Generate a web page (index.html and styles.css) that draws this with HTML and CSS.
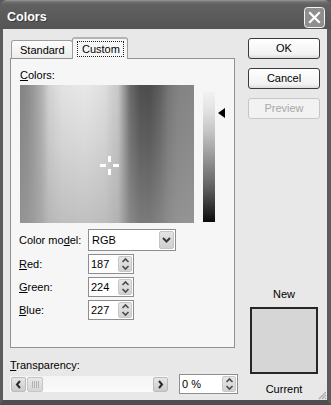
FILE: index.html
```html
<!DOCTYPE html>
<html>
<head>
<meta charset="utf-8">
<title>Colors</title>
<link rel="stylesheet" href="styles.css">
</head>
<body>
<div class="window">
  <div class="titlebar">
    <span class="title">Colors</span>
    <span class="close">
      <svg width="21" height="21" viewBox="0 0 21 21">
        <rect x="0.5" y="0.5" width="20" height="20" rx="3" fill="#8e8e8e" stroke="#f4f4f4"/>
        <path d="M6 6 L15 15 M15 6 L6 15" stroke="#fff" stroke-width="2.2" stroke-linecap="square"/>
      </svg>
    </span>
  </div>
  <div class="frame">
    <div class="left">
      <div class="tabs">
        <div class="tab">Standard</div>
        <div class="tab active"><span class="focus">Custom</span></div>
      </div>
      <div class="panel">
        <div class="label"><u>C</u>olors:</div>
        <div class="picker">
          <div class="spectrum">
            <svg class="cross" width="19" height="19" viewBox="0 0 19 19">
              <rect x="0" y="8" width="6" height="3" fill="#fff"/>
              <rect x="13" y="8" width="6" height="3" fill="#fff"/>
              <rect x="8" y="0" width="3" height="6" fill="#fff"/>
              <rect x="8" y="13" width="3" height="6" fill="#fff"/>
            </svg>
          </div>
          <div class="lum-wrap">
            <div class="lum"></div>
            <span class="pointer"></span>
          </div>
        </div>
        <div class="fields">
          <span class="flabel">Color mo<u>d</u>el:</span>
          <div class="combo">
            <span class="val">RGB</span>
            <span class="combo-btn">
              <svg width="9" height="6" viewBox="0 0 9 6"><path d="M1 1 L4.5 4.5 L8 1" fill="none" stroke="#3a3a3a" stroke-width="2"/></svg>
            </span>
          </div>
          <span class="flabel"><u>R</u>ed:</span>
          <div class="spin">
            <span class="val">187</span>
            <span class="spin-btn"><svg width="9" height="14" viewBox="0 0 9 14"><path d="M1.5 5 L4.5 2 L7.5 5 M1.5 9 L4.5 12 L7.5 9" fill="none" stroke="#4a4a4a" stroke-width="1.6"/></svg></span>
          </div>
          <span class="flabel"><u>G</u>reen:</span>
          <div class="spin">
            <span class="val">224</span>
            <span class="spin-btn"><svg width="9" height="14" viewBox="0 0 9 14"><path d="M1.5 5 L4.5 2 L7.5 5 M1.5 9 L4.5 12 L7.5 9" fill="none" stroke="#4a4a4a" stroke-width="1.6"/></svg></span>
          </div>
          <span class="flabel"><u>B</u>lue:</span>
          <div class="spin">
            <span class="val">227</span>
            <span class="spin-btn"><svg width="9" height="14" viewBox="0 0 9 14"><path d="M1.5 5 L4.5 2 L7.5 5 M1.5 9 L4.5 12 L7.5 9" fill="none" stroke="#4a4a4a" stroke-width="1.6"/></svg></span>
          </div>
        </div>
      </div>
      <div class="label trans-label"><u>T</u>ransparency:</div>
      <div class="trans-row">
        <div class="scrollbar">
          <span class="sb-btn"><svg width="7" height="9" viewBox="0 0 7 9"><path d="M5 1 L2 4.5 L5 8" fill="none" stroke="#2a2a2a" stroke-width="2"/></svg></span>
          <span class="thumb"><span class="grip"></span></span>
          <span class="track"></span>
          <span class="sb-btn"><svg width="7" height="9" viewBox="0 0 7 9"><path d="M2 1 L5 4.5 L2 8" fill="none" stroke="#2a2a2a" stroke-width="2"/></svg></span>
        </div>
        <div class="spin wide">
          <span class="val">0 %</span>
          <span class="spin-btn"><svg width="9" height="14" viewBox="0 0 9 14"><path d="M1.5 5 L4.5 2 L7.5 5 M1.5 9 L4.5 12 L7.5 9" fill="none" stroke="#4a4a4a" stroke-width="1.6"/></svg></span>
        </div>
      </div>
    </div>
    <div class="right">
      <div class="btn">OK</div>
      <div class="btn">Cancel</div>
      <div class="btn disabled">Preview</div>
      <div class="cap new">New</div>
      <div class="swatch"></div>
      <div class="cap current">Current</div>
    </div>
    <svg class="grip-corner" width="9" height="9" viewBox="0 0 9 9">
      <path d="M8 1 L1 8 M8 4 L4 8 M8 7 L7 8" stroke="#a8a8a8" stroke-width="1.2"/>
    </svg>
  </div>
</div>
</body>
</html>
```

FILE: styles.css
```css
* { box-sizing: border-box; }

html, body {
  margin: 0;
  padding: 0;
}

body {
  width: 331px;
  height: 405px;
  background: #5a5a5a;
  font-family: "Liberation Sans", Arial, sans-serif;
  font-size: 11px;
  color: #000;
  overflow: hidden;
}

.window {
  width: 331px;
  height: 405px;
  display: flex;
  flex-direction: column;
}

.titlebar {
  height: 29px;
  flex: none;
  display: flex;
  justify-content: space-between;
  align-items: flex-start;
  padding: 7px 6px 0 7px;
  border-radius: 7px 7px 0 0;
  background: linear-gradient(#9a9a9a 0, #6e6e6e 2px, #606060 5px, #5a5a5a 60%, #545454 100%);
}

.title {
  font-family: "Liberation Sans", Arial, sans-serif;
  font-weight: bold;
  font-size: 12.5px;
  line-height: 20px;
  color: #fff;
  text-shadow: 1px 1px 0 #3a3a3a;
}

.close {
  display: block;
  width: 21px;
  height: 21px;
}

.close svg { display: block; }

.frame {
  flex: 1;
  position: relative;
  background: #e8e8e8;
  border-left: 3px solid #5c5c5c;
  border-right: 4px solid #5c5c5c;
  border-bottom: 5px solid #4e4e4e;
  display: grid;
  grid-template-columns: 228px 72px;
  column-gap: 10px;
  align-items: start;
  padding: 8px 7px 0 7px;
}

/* ---------- left column ---------- */

.tabs {
  display: flex;
  align-items: flex-end;
  height: 21px;
  padding-left: 1px;
  position: relative;
  z-index: 1;
}

.tab {
  height: 18px;
  width: 62px;
  border: 1px solid #9c9c9c;
  border-bottom: none;
  border-radius: 3px 3px 0 0;
  background: linear-gradient(#fdfdfd, #ececec);
  padding: 3px 0 0 8px;
  line-height: 13px;
}

.tab.active {
  width: 56px;
  height: 22px;
  margin-left: -1px;
  margin-bottom: -1px;
  background: #f6f6f6;
  border-color: #9c9c9c;
  border-top: 2px solid #b4b4b4;
  padding: 2px 0 0 4px;
}

.focus {
  display: inline-block;
  border: 1px dotted #222;
  padding: 1px 3px 0 4px;
  line-height: 13px;
  height: 16px;
}

.panel {
  width: 225px;
  height: 290px;
  border: 1px solid #929292;
  background: #f6f6f6;
  padding: 10px 0 0 9px;
}

.label {
  line-height: 13px;
}

.picker {
  display: flex;
  gap: 9px;
  margin-top: 3px;
}

.spectrum {
  position: relative;
  width: 174px;
  height: 138px;
  background:
    linear-gradient(to bottom, rgba(160,160,160,0) 0%, rgba(160,160,160,0.2) 40%, rgba(160,160,160,0.55) 100%),
    linear-gradient(to right,
      #828282 0, #8c8c8c 8px, #9a9a9a 14px, #b2b2b2 22px, #d2d2d2 29px,
      #e2e2e2 42px, #e8e8e8 65px, #dedede 85px, #d0d0d0 92px, #c8c8c8 98px,
      #9a9a9a 104px, #6a6a6a 110px, #4e4e4e 120px, #4c4c4c 130px, #5e5e5e 140px,
      #747474 148px, #828282 158px, #868686 174px);
}

.cross {
  position: absolute;
  left: 80px;
  top: 71px;
}

.lum-wrap {
  position: relative;
  padding-top: 7px;
  width: 22px;
}

.lum {
  width: 12px;
  height: 130px;
  background: linear-gradient(to bottom, #f2f2f2 0%, #e2e2e2 14%, #c2c2c2 32%, #939393 52%, #5c5c5c 75%, #262626 92%, #0a0a0a 100%);
}

.pointer {
  position: absolute;
  left: 15px;
  top: 23px;
  width: 0;
  height: 0;
  border-top: 5px solid transparent;
  border-bottom: 5px solid transparent;
  border-right: 7px solid #000;
}

.fields {
  display: grid;
  grid-template-columns: 68px auto;
  grid-auto-rows: 20px;
  grid-template-rows: 22px;
  row-gap: 3px;
  margin-top: 6px;
  align-items: center;
  justify-items: start;
}

.flabel {
  line-height: 13px;
  margin-left: -1px;
}

.combo {
  width: 88px;
  height: 22px;
  display: flex;
  align-items: center;
  justify-content: space-between;
  background: #fff;
  border: 1px solid #8e8e8e;
  padding: 0 1px 0 3px;
}

.combo-btn {
  width: 15px;
  height: 18px;
  border-radius: 2px;
  background: linear-gradient(#e4e4e4, #cfcfcf);
  border: 1px solid #c4c4c4;
  display: flex;
  align-items: center;
  justify-content: center;
}

.spin {
  width: 46px;
  height: 20px;
  display: flex;
  align-items: center;
  justify-content: space-between;
  background: #fff;
  border: 1px solid #8e8e8e;
  padding: 0 1px 0 2px;
}

.spin-btn {
  width: 14px;
  height: 16px;
  border-radius: 2px;
  background: linear-gradient(#e6e6e6, #d2d2d2);
  border: 1px solid #c8c8c8;
  display: flex;
  align-items: center;
  justify-content: center;
}

.val { line-height: 13px; }

.trans-label {
  margin-top: 11px;
}

.trans-row {
  display: flex;
  align-items: center;
  margin-top: 2px;
  height: 20px;
}

.scrollbar {
  width: 158px;
  height: 16px;
  display: flex;
  align-items: center;
  padding-left: 1px;
  background: linear-gradient(#f4f4f4, #fbfbfb);
}

.sb-btn {
  width: 15px;
  height: 15px;
  border-radius: 2px;
  border: 1px solid #bcbcbc;
  background: linear-gradient(#e6e6e6, #cccccc);
  display: flex;
  align-items: center;
  justify-content: center;
  flex: none;
}

.thumb {
  width: 16px;
  height: 15px;
  margin-left: 1px;
  border-radius: 2px;
  border: 1px solid #c6c6c6;
  background: linear-gradient(#e8e8e8, #d6d6d6);
  display: flex;
  align-items: center;
  justify-content: center;
  flex: none;
}

.grip {
  width: 7px;
  height: 7px;
  background: repeating-linear-gradient(to right, #b2b2b2 0, #b2b2b2 1px, transparent 1px, transparent 2px);
}

.track {
  flex: 1;
  height: 15px;
}

.spin.wide {
  width: 59px;
  margin-left: 11px;
  height: 20px;
}

/* ---------- right column ---------- */

.right {
  display: flex;
  flex-direction: column;
  margin-top: 1px;
}

.btn {
  height: 21px;
  margin-bottom: 9px;
  border: 1px solid #3a3a3a;
  border-radius: 3px;
  background: linear-gradient(#ffffff, #f2f2f2 80%, #dcdcdc);
  display: flex;
  align-items: center;
  justify-content: center;
  line-height: 13px;
}

.btn.disabled {
  border-color: #c6c6c6;
  color: #a8a8a8;
  background: #f2f2f2;
}

.cap {
  text-align: center;
  line-height: 13px;
}

.new {
  margin-top: 160px;
}

.swatch {
  width: 68px;
  height: 67px;
  margin: 6px 2px 0 2px;
  border: 2px solid #262626;
  background: #d6d6d6;
}

.current {
  margin-top: 9px;
}

.grip-corner {
  position: absolute;
  right: 0;
  bottom: 0;
}
```
